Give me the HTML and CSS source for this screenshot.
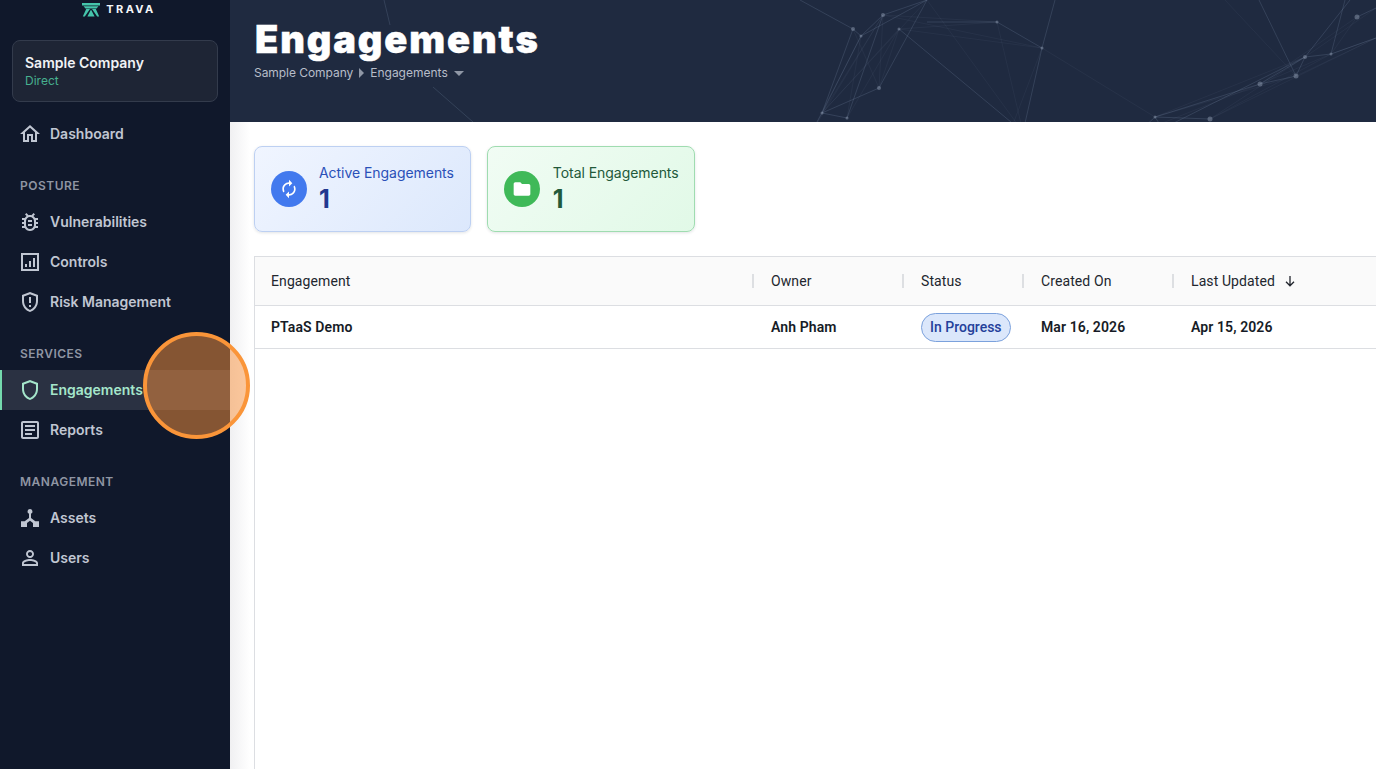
FILE: index.html
```html
<!DOCTYPE html>
<html lang="en">
<head>
<meta charset="utf-8">
<title>Engagements</title>
<link rel="stylesheet" href="styles.css">
</head>
<body>
<div class="app">
  <aside class="sidebar">
    <div class="logo">
      <svg class="logo-mark" viewBox="0 0 18 14" width="18" height="14"><path d="M0 0h18v2.400H0zM1.500 3.200h15l-2 2.200H3.500zM4.200 6H8L2.800 13.500H.8zM13.800 6H10l5.200 7.500h2zM9 6.500l3.600 7H5.400z"/></svg>
      <span class="logo-text">TRAVA</span>
    </div>
    <div class="company">
      <div class="company-name">Sample Company</div>
      <div class="company-type">Direct</div>
    </div>
    <nav class="nav">
      <a class="nav-item"><svg class="nav-icon" viewBox="0 0 24 24"><path d="M12 5.690l5 4.500V18h-2v-6H9v6H7v-7.810l5-4.500M12 3L2 12h3v8h6v-6h2v6h6v-8h3L12 3z"/></svg>Dashboard</a>
      <div class="nav-label">POSTURE</div>
      <a class="nav-item"><svg class="nav-icon" viewBox="0 0 24 24"><path d="M20 8h-2.810c-.45-.78-1.070-1.450-1.820-1.960L17 4.410 15.590 3l-2.170 2.170C12.960 5.060 12.490 5 12 5s-.96.06-1.410.17L8.410 3 7 4.410l1.620 1.630C7.880 6.550 7.260 7.220 6.810 8H4v2h2.090c-.05.33-.09.66-.09 1v1H4v2h2v1c0 .34.04.67.09 1H4v2h2.810c1.040 1.790 2.970 3 5.190 3s4.150-1.210 5.190-3H20v-2h-2.090c.05-.33.09-.66.09-1v-1h2v-2h-2v-1c0-.34-.04-.67-.09-1H20V8zm-4 7c0 2.210-1.790 4-4 4s-4-1.790-4-4v-4c0-2.210 1.790-4 4-4s4 1.790 4 4v4zm-6-1h4v2h-4zm0-4h4v2h-4z"/></svg>Vulnerabilities</a>
      <a class="nav-item"><svg class="nav-icon" viewBox="0 0 24 24"><path d="M3 3h18v18H3V3zm2 2v14h14V5H5zm2 9h2v3H7zm4-3h2v6h-2zm4-3h2v9h-2z"/></svg>Controls</a>
      <a class="nav-item"><svg class="nav-icon" viewBox="0 0 24 24"><path d="M12 2L4 5v6.090c0 5.050 3.410 9.760 8 10.910 4.590-1.150 8-5.860 8-10.910V5l-8-3zm6 9.090c0 4-2.550 7.700-6 8.830-3.450-1.130-6-4.820-6-8.830v-4.700l6-2.250 6 2.250v4.700zM11 7h2v6h-2zm0 8h2v2h-2z"/></svg>Risk Management</a>
      <div class="nav-label">SERVICES</div>
      <a class="nav-item active"><svg class="nav-icon" viewBox="0 0 24 24"><path d="M12 2L4 5v6.090c0 5.050 3.410 9.760 8 10.910 4.590-1.150 8-5.860 8-10.910V5l-8-3zm6 9.090c0 4-2.550 7.700-6 8.830-3.450-1.130-6-4.820-6-8.830v-4.700l6-2.250 6 2.250v4.700z"/></svg>Engagements</a>
      <a class="nav-item"><svg class="nav-icon" viewBox="0 0 24 24"><path d="M19 5v14H5V5h14m0-2H5c-1.100 0-2 .9-2 2v14c0 1.100.9 2 2 2h14c1.100 0 2-.9 2-2V5c0-1.100-.9-2-2-2zM14 17H7v-2h7v2zm3-4H7v-2h10v2zm0-4H7V7h10v2z"/></svg>Reports</a>
      <div class="nav-label">MANAGEMENT</div>
      <a class="nav-item"><svg class="nav-icon" viewBox="0 0 24 24"><path d="M12 3a2.500 2.500 0 0 1 1 4.790v4.310l4.300 3.100H21V21h-6v-4l-3-2.300L9 17v4H3v-5.800h3.700l4.300-3.100V7.790A2.500 2.500 0 0 1 12 3z"/></svg>Assets</a>
      <a class="nav-item"><svg class="nav-icon" viewBox="0 0 24 24"><path d="M12 5.900c1.160 0 2.100.94 2.100 2.100s-.94 2.100-2.100 2.100S9.900 9.160 9.900 8s.94-2.100 2.100-2.100m0 9c2.970 0 6.100 1.460 6.100 2.100v1.100H5.900V17c0-.64 3.130-2.100 6.100-2.100M12 4C9.790 4 8 5.790 8 8s1.790 4 4 4 4-1.790 4-4-1.790-4-4-4zm0 9c-2.670 0-8 1.340-8 4v3h16v-3c0-2.660-5.330-4-8-4z"/></svg>Users</a>
    </nav>
  </aside>
  <main class="main">
    <header class="hero">
      <svg class="hero-net" viewBox="230 0 1146 122" width="1146" height="122" aria-hidden="true">
        <g class="net-faint">
          <path d="M822 113L883 15M822 113L899 29M822 113L927 0M847 118L899 29M847 118L861 36M810 135L861 36M810 135L883 15M879 88L853 29M879 88L899 29M879 88L883 15M997 22L899 29M997 22L883 15M997 22L1023 132M927 0L1023 132M1042 48L899 29M1042 48L1155 117M1010 132L1042 48M883 15L1042 48M1155 117L1305 57M1155 117L1296 76M1210 119L1305 57M1210 119L1331 54M1260 84L1331 54M1260 84L1357 17M1296 76L1376 38M1305 57L1376 8M1331 54L1376 38M1210 119L1376 38M1225 0L1296 76M1120 140L1260 84M1331 54L1357 17"/>
        </g>
        <g class="net-lines">
          <path d="M800 0L853 29L861 36L883 15L927 0L879 88L822 113L847 118M899 29L1023 132M853 29L822 113L810 135M861 36L822 113M883 15L847 118M927 0L861 36M997 22L1042 48L1023 132M997 22L927 22M1055 0L1042 48M1155 117L1210 119M1155 117L1260 84L1305 57L1331 54L1376 38M1155 117L1130 140M1155 117L1170 140M1259 0L1296 76L1305 57L1140 140M1260 84L1296 76M1305 57L1350 0M1331 54L1345 0M1357 17L1376 8M384 0L390 25M433 87L473 122"/>
        </g>
        <g class="net-nodes">
          <circle cx="853" cy="29" r="2"/><circle cx="861" cy="36" r="1.500"/><circle cx="883" cy="15" r="2"/><circle cx="899" cy="29" r="1.500"/><circle cx="997" cy="22" r="1.500"/><circle cx="1042" cy="48" r="1.500"/><circle cx="879" cy="88" r="2"/><circle cx="822" cy="113" r="1.500"/><circle cx="847" cy="118" r="1.500"/><circle cx="1023" cy="132" r="2"/><circle cx="1155" cy="117" r="1.500"/><circle cx="1210" cy="119" r="2.500"/><circle cx="1260" cy="84" r="2.500"/><circle cx="1296" cy="76" r="2.500"/><circle cx="1305" cy="57" r="2"/><circle cx="1331" cy="54" r="1.500"/><circle cx="1357" cy="17" r="2.500"/>
        </g>
      </svg>
      <h1 class="hero-title">Engagements</h1>
      <div class="crumbs">
        <span>Sample Company</span>
        <span class="tri-right"></span>
        <span>Engagements</span>
        <span class="tri-down"></span>
      </div>
    </header>
    <section class="content">
      <div class="stats">
        <div class="stat stat-blue">
          <span class="stat-icon"><svg viewBox="0 0 24 24" width="20" height="20"><path d="M12 6v3l4-4-4-4v3c-4.420 0-8 3.580-8 8 0 1.570.46 3.030 1.240 4.260L6.700 14.800c-.45-.83-.7-1.790-.7-2.800 0-3.310 2.690-6 6-6zm6.760 1.740L17.300 9.200c.44.84.7 1.790.7 2.800 0 3.310-2.690 6-6 6v-3l-4 4 4 4v-3c4.420 0 8-3.580 8-8 0-1.570-.46-3.030-1.240-4.260z"/></svg></span>
          <div>
            <div class="stat-label">Active Engagements</div>
            <div class="stat-value">1</div>
          </div>
        </div>
        <div class="stat stat-green">
          <span class="stat-icon"><svg viewBox="0 0 24 24" width="20" height="20"><path d="M10 4H4c-1.100 0-2 .9-2 2v12c0 1.100.9 2 2 2h16c1.100 0 2-.9 2-2V8c0-1.100-.9-2-2-2h-8l-2-2z"/></svg></span>
          <div>
            <div class="stat-label">Total Engagements</div>
            <div class="stat-value">1</div>
          </div>
        </div>
      </div>
      <div class="table">
        <div class="row head">
          <div class="cell">Engagement</div>
          <div class="cell sep">Owner</div>
          <div class="cell sep">Status</div>
          <div class="cell sep">Created On</div>
          <div class="cell sep">Last Updated
            <svg class="sort" viewBox="0 0 14 14" width="14" height="14"><path d="M7 2v9.500M3 7.800L7 11.800L11 7.800"/></svg>
          </div>
        </div>
        <div class="row body">
          <div class="cell strong">PTaaS Demo</div>
          <div class="cell strong">Anh Pham</div>
          <div class="cell"><span class="pill">In Progress</span></div>
          <div class="cell strong">Mar 16, 2026</div>
          <div class="cell strong">Apr 15, 2026</div>
        </div>
      </div>
    </section>
  </main>
</div>
<div class="click-ring"></div>
</body>
</html>
```
FILE: styles.css
```css
* { box-sizing: border-box; }
html, body { margin: 0; height: 100%; overflow: hidden; }
body { font-family: Inter, "Liberation Sans", sans-serif; background: #fff; color: #161b26; }
.app { display: flex; height: 769px; }

.sidebar { width: 230px; flex: none; background: #10182b; display: flex; flex-direction: column; position: relative; z-index: 2; }
.logo { height: 40px; display: flex; justify-content: center; gap: 6px; padding-top: 3px; padding-left: 8px; }
.logo-mark { fill: #45c4ab; flex: none; }
.logo-text { color: #f4f5f8; font-size: 11px; line-height: 13px; font-weight: 700; letter-spacing: 2.400px; }
.company { margin: 0 12px; height: 62px; padding: 13px 12px; background: #1e2535; border: 1px solid #333b4c; border-radius: 8px; }
.company-name { color: #f1f3f6; font-size: 14px; line-height: 17px; font-weight: 600; }
.company-type { margin-top: 1px; color: #47b08f; font-size: 12px; line-height: 17px; }
.nav { display: flex; flex-direction: column; padding-top: 12px; }
.nav-item { height: 40px; display: flex; align-items: center; gap: 8px; padding: 0 0 1px 18px; color: #c0c6d2; font-size: 14px; font-weight: 600; }
.nav-icon { width: 24px; height: 24px; fill: currentColor; flex: none; }
.nav-item.active { background: #2a3142; color: #a5e6cb; box-shadow: inset 2px 0 0 #74d9ad; }
.nav-label { height: 48px; padding: 24px 0 0 20px; color: #8f95a3; font-size: 12px; line-height: 15px; font-weight: 600; letter-spacing: .5px; }

.main { flex: 1; min-width: 0; display: flex; flex-direction: column; overflow: hidden; }
.hero { height: 122px; flex: none; position: relative; background: #1f2a40; padding: 15px 0 0 25px; overflow: hidden; }
.hero-net { position: absolute; left: 0; top: 0; }
.net-faint { fill: none; stroke: #8b9cb8; stroke-width: .6; opacity: .12; }
.net-lines { fill: none; stroke: #8b9cb8; stroke-width: .8; opacity: .26; }
.net-nodes { fill: #8b98ad; opacity: .5; }
.hero-title { position: relative; margin: 0; color: #fff; font-size: 38px; line-height: 48px; font-weight: 900; letter-spacing: 1.900px; -webkit-text-stroke: .5px #fff; }
.crumbs { position: relative; display: flex; align-items: center; gap: 5px; margin: 2px 0 0 -1px; color: #b7bdc9; font-size: 12px; line-height: 16px; }
.crumbs span:first-child { letter-spacing: -.05px; }
.tri-right { width: 0; height: 0; margin: 0 1px; border-left: 5px solid #8f97a6; border-top: 5px solid transparent; border-bottom: 5px solid transparent; }
.tri-down { width: 0; height: 0; margin-left: 1px; border-top: 5px solid #8f97a6; border-left: 5px solid transparent; border-right: 5px solid transparent; }

.content { flex: 1; min-height: 0; display: flex; flex-direction: column; padding: 24px 0 0 24px; background: linear-gradient(90deg, #f0f0f2 0, #fff 20px); }
.stats { display: flex; gap: 16px; margin-bottom: 24px; }
.stat { height: 86px; display: flex; align-items: center; gap: 12px; padding: 0 16px; border-radius: 8px; border: 1px solid; box-shadow: 0 1px 3px rgba(20, 30, 50, .12); }
.stat-blue { background: linear-gradient(135deg, #f0f5ff, #dce8fc); border-color: #bdd0f2; color: #2a50b8; }
.stat-green { gap: 13px; padding-right: 15px; background: linear-gradient(135deg, #f1fcf4, #e1f9e7); border-color: #9fdcb0; color: #22593a; }
.stat-icon { width: 36px; height: 36px; border-radius: 50%; display: flex; align-items: center; justify-content: center; fill: #fff; flex: none; }
.stat-blue .stat-icon { background: #4279ee; }
.stat-green .stat-icon { background: #3fb958; }
.stat-label { margin: -1px 0 1px; font-size: 14px; line-height: 17px; letter-spacing: -.05px; }
.stat-blue .stat-value { color: #22388f; }
.stat-value { font-size: 25px; line-height: 30px; font-weight: 700; margin-top: 3px; }

.table { flex: 1; width: 1122px; background: #fff; border-left: 1px solid #dcdee2; border-top: 1px solid #dcdee2; }
.row { display: grid; grid-template-columns: 500px 150px 120px 150px 1fr; font-family: Roboto, "Liberation Sans", sans-serif; font-size: 14px; }
.head { height: 49px; background: #fafafa; border-bottom: 1px solid #dcdee2; color: #22262e; letter-spacing: .1px; }
.body { height: 43px; border-bottom: 1px solid #dcdee2; }
.cell { display: flex; align-items: center; padding-left: 16px; position: relative; }
.sep::before { content: ""; position: absolute; left: -3px; top: 17px; height: 14px; width: 2px; background: #dddfe2; }
.strong { font-weight: 600; color: #161b26; letter-spacing: .1px; }
.sort { margin-left: 8px; fill: none; stroke: #22262e; stroke-width: 1.300; }
.pill { height: 29px; padding: 0 8px; display: inline-flex; align-items: center; border-radius: 15px; background: #dbe7fb; border: 1px solid #7ba1dc; color: #24409a; font-weight: 500; }

.click-ring { position: absolute; left: 143px; top: 332px; width: 107px; height: 107px; border-radius: 50%; background: rgba(250, 145, 60, .5); border: 4px solid #fa9539; z-index: 5; }
```
